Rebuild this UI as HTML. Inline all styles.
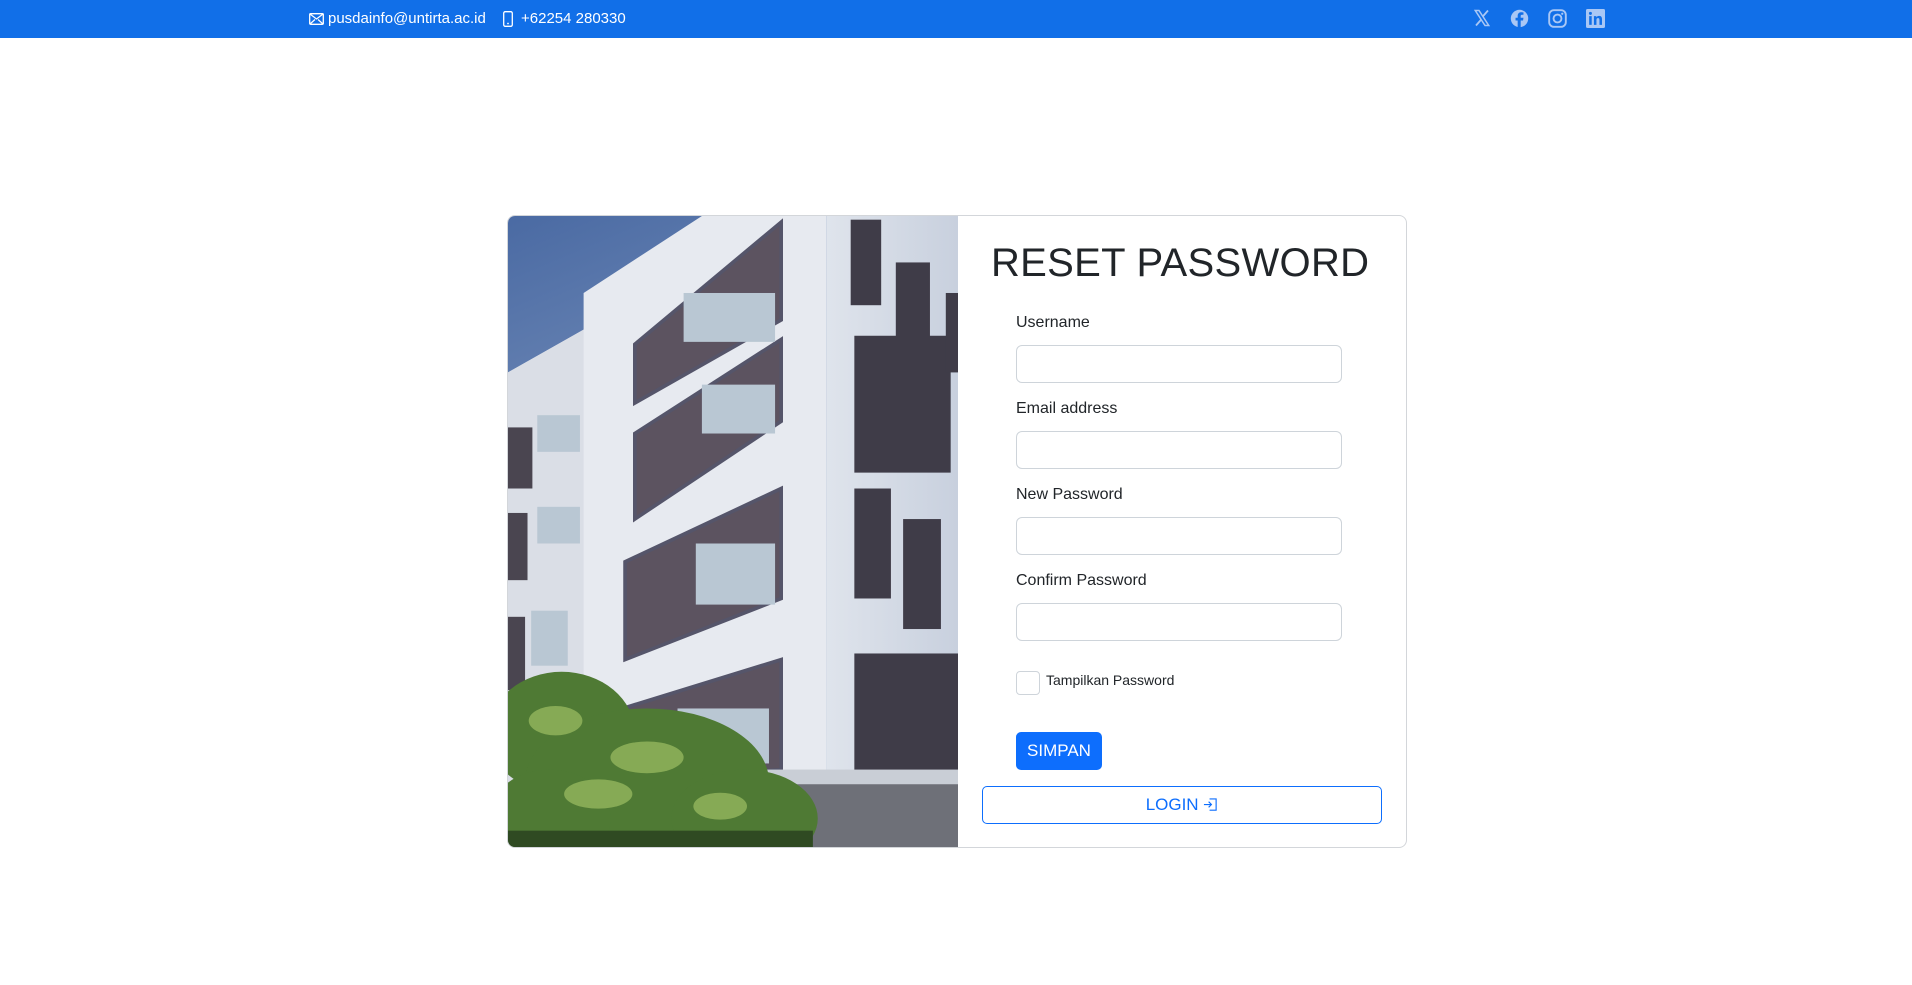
<!DOCTYPE html>
<html><head><meta charset="utf-8">
<style>
*{box-sizing:border-box;margin:0;padding:0}
body{width:1912px;height:985px;background:#fff;font-family:"Liberation Sans",sans-serif;color:#212529;position:relative;overflow:hidden}
.top{position:absolute;left:0;top:0;width:1912px;height:38px;background:#116fe8;color:#fff;font-size:15px}
.top span{position:absolute;top:10px}
.card{position:absolute;left:507px;top:215px;width:900px;height:633px;border:1px solid #d3d6da;border-radius:8px;overflow:hidden}
.img{position:absolute;left:0;top:0;width:450px;height:633px}
.title{position:absolute;font-size:40px;color:#212529;letter-spacing:0.3px;white-space:nowrap}
.lbl{position:absolute;left:508px;font-size:16px}
.inp{position:absolute;left:508px;width:326px;height:38px;border:1px solid #ced4da;border-radius:6px}
</style></head><body>
<div class="top">
<svg style="position:absolute;left:309px;top:13px" width="15" height="12" viewBox="0 0 15 12"><rect x="0.7" y="0.7" width="13.6" height="10.6" rx="1" fill="none" stroke="#fff" stroke-width="1.3"/><path d="M1 1l6.5 5 6.5-5M1 11l5-4.5M14 11l-5-4.5" fill="none" stroke="#fff" stroke-width="1.2"/></svg>
<span style="left:328px">pusdainfo@untirta.ac.id</span>
<svg style="position:absolute;left:503px;top:11px" width="10" height="16" viewBox="0 0 10 16"><rect x="0.7" y="0.7" width="8.6" height="14.6" rx="1.5" fill="none" stroke="#fff" stroke-width="1.3"/><circle cx="5" cy="12.5" r="0.9" fill="#fff"/></svg>
<span style="left:521px">+62254 280330</span>
<svg style="position:absolute;left:1473px;top:9px" width="18" height="18" viewBox="0 0 24 24"><path d="M3 2h5l13 20h-5z" fill="none" stroke="#a9c7f5" stroke-width="2"/><path d="M20 2l-7 8M4 22l7-8" stroke="#a9c7f5" stroke-width="2.4"/></svg>
<svg style="position:absolute;left:1510px;top:9px" width="19" height="19" viewBox="0 0 24 24"><circle cx="12" cy="12" r="11" fill="#a9c7f5"/><path d="M13.5 24V14.5h3l.5-3.5h-3.5V9c0-1 .4-1.7 1.8-1.7H17V4.3c-.4 0-1.5-.2-2.8-.2-2.8 0-4.5 1.7-4.5 4.7V11H7v3.5h2.7V24z" fill="#116fe8"/></svg>
<svg style="position:absolute;left:1548px;top:9px" width="19" height="19" viewBox="0 0 24 24"><rect x="1.5" y="1.5" width="21" height="21" rx="6" fill="none" stroke="#a9c7f5" stroke-width="2.4"/><circle cx="12" cy="12" r="5" fill="none" stroke="#a9c7f5" stroke-width="2.4"/><circle cx="18" cy="6" r="1.4" fill="#a9c7f5"/></svg>
<svg style="position:absolute;left:1586px;top:9px" width="19" height="19" viewBox="0 0 24 24"><rect width="24" height="24" rx="2" fill="#a9c7f5"/><rect x="4" y="9" width="3.2" height="11" fill="#116fe8"/><circle cx="5.6" cy="5.6" r="1.9" fill="#116fe8"/><path d="M10 9h3v1.6c.6-1 1.8-1.9 3.6-1.9 3 0 3.6 2 3.6 4.6V20H17v-5.6c0-1.4-.1-2.9-1.8-2.9s-2 1.3-2 2.8V20H10z" fill="#116fe8"/></svg>
</div>

<div class="card">
<svg class="img" viewBox="416 177 369 518" preserveAspectRatio="none">
<defs><linearGradient id="sky" x1="0" y1="0" x2="0.3" y2="1"><stop offset="0" stop-color="#4a6aa3"/><stop offset="1" stop-color="#a6b8d3"/></linearGradient>
<linearGradient id="side" x1="0" y1="0" x2="1" y2="0"><stop offset="0" stop-color="#dfe4ec"/><stop offset="1" stop-color="#c8d0de"/></linearGradient></defs>
<rect x="416" y="177" width="369" height="518" fill="url(#sky)"/>
<polygon points="416,305 478,270 478,240 575,177 677,177 677,695 416,695" fill="#e7eaf0"/>
<polygon points="416,305 478,270 478,695 416,695" fill="#dadee6"/>
<polygon points="677,177 785,177 785,695 677,695" fill="url(#side)"/>
<g fill="#5c5360" stroke="#55556a" stroke-width="3">
<polygon points="520,282 640,182 640,262 520,330"/>
<polygon points="520,355 640,278 640,345 520,425"/>
<polygon points="512,460 640,400 640,490 512,540"/>
<polygon points="510,580 640,540 640,630 510,640"/>
</g>
<g fill="#b9c7d3"><rect x="560" y="240" width="75" height="40"/><rect x="575" y="315" width="60" height="40"/><rect x="570" y="445" width="65" height="50"/><rect x="555" y="580" width="75" height="45"/><rect x="440" y="340" width="35" height="30"/><rect x="440" y="415" width="35" height="30"/><rect x="435" y="500" width="30" height="45"/></g>
<g fill="#4a4550"><rect x="416" y="350" width="20" height="50"/><rect x="416" y="420" width="16" height="55"/><rect x="416" y="505" width="14" height="60"/></g>
<g fill="#3f3c48"><rect x="697" y="180" width="25" height="70"/><rect x="734" y="215" width="28" height="65"/><rect x="700" y="275" width="79" height="112"/><rect x="700" y="400" width="30" height="90"/><rect x="740" y="425" width="31" height="90"/><rect x="700" y="535" width="85" height="105"/><rect x="775" y="240" width="10" height="65"/></g>
<rect x="610" y="640" width="175" height="55" fill="#6e7078"/>
<rect x="610" y="630" width="175" height="12" fill="#c9ced6"/>
<g fill="#4f7a34"><ellipse cx="460" cy="600" rx="60" ry="50"/><ellipse cx="530" cy="640" rx="100" ry="60"/><ellipse cx="610" cy="670" rx="60" ry="40"/><ellipse cx="450" cy="670" rx="50" ry="40"/></g>
<g fill="#86aa55"><ellipse cx="455" cy="590" rx="22" ry="12"/><ellipse cx="530" cy="620" rx="30" ry="13"/><ellipse cx="490" cy="650" rx="28" ry="12"/><ellipse cx="590" cy="660" rx="22" ry="11"/></g>
<rect x="416" y="680" width="250" height="15" fill="#2f4a22"/>
</svg>
<div class="title" style="left:483px;top:25px">RESET PASSWORD</div>
<div class="lbl" style="top:98px">Username</div>
<div class="inp" style="top:129px"></div>
<div class="lbl" style="top:184px">Email address</div>
<div class="inp" style="top:215px"></div>
<div class="lbl" style="top:270px">New Password</div>
<div class="inp" style="top:301px"></div>
<div class="lbl" style="top:356px">Confirm Password</div>
<div class="inp" style="top:387px"></div>
<div style="position:absolute;left:508px;top:455px;width:24px;height:24px;border:1px solid #ced4da;border-radius:4px"></div>
<div style="position:absolute;left:538px;top:456px;font-size:14px">Tampilkan Password</div>
<div style="position:absolute;left:508px;top:516px;width:86px;height:38px;background:#0d6efd;border-radius:5px;color:#fff;font-size:17px;text-align:center;line-height:38px">SIMPAN</div>
<div style="position:absolute;left:474px;top:570px;width:400px;height:38px;border:1px solid #0d6efd;border-radius:5px;color:#0d6efd;font-size:17px;text-align:center;line-height:36px">LOGIN <svg width="15" height="15" viewBox="0 0 16 16" style="vertical-align:-2px"><path d="M7 2h7v12H7" fill="none" stroke="#0d6efd" stroke-width="1.2"/><path d="M1 8h8M6 5l3 3-3 3" fill="none" stroke="#0d6efd" stroke-width="1.2"/></svg></div>
</div>
</body></html>
